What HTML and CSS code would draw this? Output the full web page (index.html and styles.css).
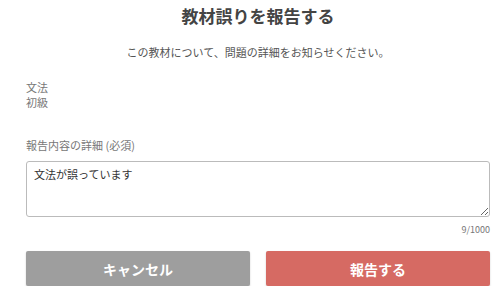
FILE: index.html
```html
<!DOCTYPE html>
<html lang="ja">
<head>
    <meta charset="UTF-8">
    <meta name="viewport" content="width=device-width, initial-scale=1.0">
    <title>教材誤りを報告する</title>
    <link rel="stylesheet" href="styles.css">
</head>
<body>
    <div class="dialog">
        <h1>教材誤りを報告する</h1>
        <p class="lead">この教材について、問題の詳細をお知らせください。</p>
        <div class="meta">
            <div>文法</div>
            <div>初級</div>
        </div>
        <label class="label" for="detail">報告内容の詳細 (必須)</label>
        <textarea id="detail" class="detail">文法が誤っています</textarea>
        <div class="count">9/1000</div>
        <div class="actions">
            <button class="btn cancel">キャンセル</button>
            <button class="btn submit">報告する</button>
        </div>
    </div>
</body>
</html>
```

FILE: styles.css
```css
body {
    margin: 0;
    font-family: 'Noto Sans CJK JP', 'Noto Sans', sans-serif;
    background-color: #fff;
    color: #555;
}
.dialog {
    padding: 5px 10px 0 26px;
    display: flex;
    flex-direction: column;
}
h1 {
    margin: 0;
    font-size: 17px;
    line-height: 22px;
    text-align: center;
    color: #444;
    font-weight: bold;
}
.lead {
    margin: 17px 0 0;
    font-size: 11px;
    line-height: 16px;
    text-align: center;
    color: #555;
}
.meta {
    margin-top: 20px;
    font-size: 11px;
    line-height: 15px;
    color: #777;
}
.label {
    margin-top: 27px;
    font-size: 11px;
    line-height: 16px;
    color: #777;
}
.detail {
    margin-top: 8px;
    height: 56px;
    box-sizing: border-box;
    padding: 4px 7px;
    border: 1px solid #bbb;
    border-radius: 3px;
    font-family: inherit;
    font-size: 11px;
    line-height: 16px;
    color: #333;
}
.count {
    margin-top: 6px;
    text-align: right;
    font-size: 9px;
    line-height: 14px;
    color: #777;
}
.actions {
    margin-top: 14px;
    display: flex;
    gap: 16px;
}
.btn {
    flex: 1;
    height: 35px;
    border: none;
    border-radius: 2px;
    color: #fff;
    font-family: inherit;
    font-size: 14px;
    font-weight: bold;
    box-shadow: 0 1px 2px rgba(0,0,0,0.2);
}
.cancel {
    background-color: #9e9e9e;
}
.submit {
    background-color: #d66a63;
}
```
